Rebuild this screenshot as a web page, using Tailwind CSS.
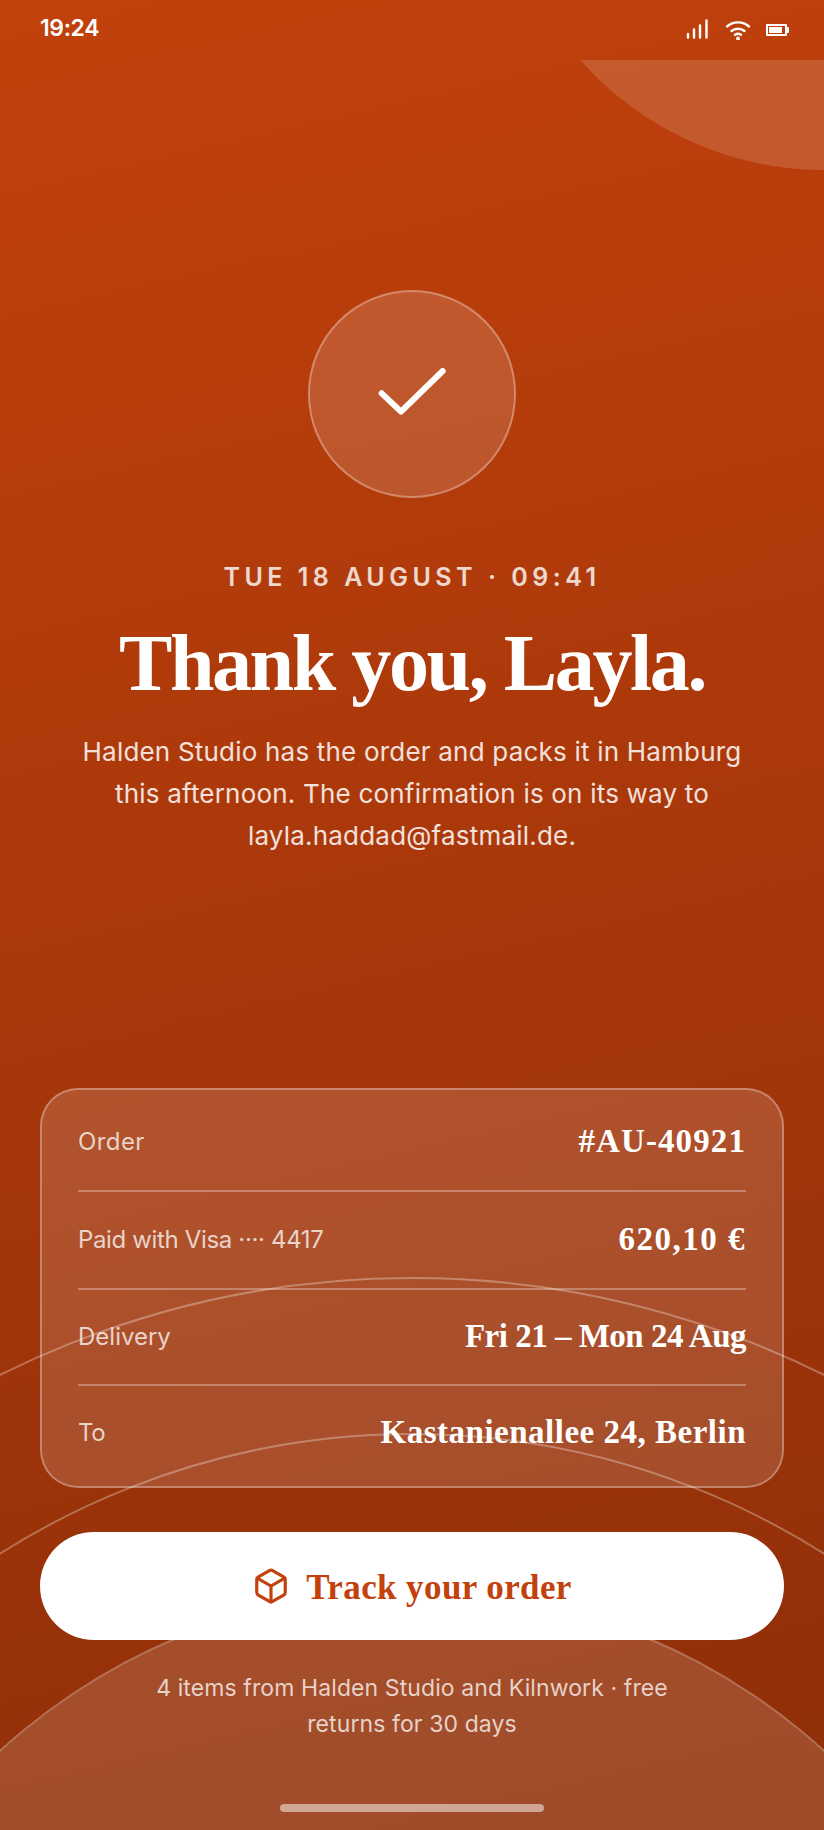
<!DOCTYPE html>
<html lang="en">
<head>
  <meta charset="UTF-8">
  <meta name="viewport" content="width=device-width, initial-scale=1.0">
  <title>Order confirmed</title>
  <script src="https://cdn.jsdelivr.net/npm/@tailwindcss/browser@4"></script>
</head>
<body class="font-['Inter',sans-serif]">
  <div class="relative w-[824px] h-[1830px] overflow-hidden bg-[linear-gradient(167deg,#c2410c,#8e2e08)] text-white">

    <!-- Decorative circles -->
    <div class="absolute top-[60px] left-0 right-0 bottom-0 overflow-hidden">
      <div class="absolute left-[499px] top-[-540px] w-[650px] h-[650px] rounded-full bg-white/14"></div>
      <div class="absolute left-[-513px] top-[1217px] w-[1850px] h-[1850px] rounded-full border-2 border-white/30"></div>
      <div class="absolute left-[-357px] top-[1373px] w-[1538px] h-[1538px] rounded-full border-2 border-white/30"></div>
      <div class="absolute left-[-200px] top-[1530px] w-[1224px] h-[1224px] rounded-full border-2 border-white/20 bg-white/14"></div>
    </div>

    <div class="relative flex flex-col items-center">
      <!-- Status bar -->
      <div class="w-full h-[60px] flex justify-between items-start px-[40px]">
        <span class="mt-[13px] text-[23px] leading-[30px] font-semibold tracking-[-0.4px]">19:24</span>
        <div class="flex items-start mt-[19px] mr-[-5px]">
          <svg width="22" height="20" viewBox="0 0 22 20" fill="none" stroke="white" stroke-width="2.4" stroke-linecap="round">
            <path d="M2 18.500v-3.500M8 18.500v-8M14 18.500v-12M20.500 18.500V1.500"/>
          </svg>
          <svg class="ml-[17px] mt-[1px]" width="26" height="20" viewBox="0 0 26 20" fill="none" stroke="white" stroke-width="2.400" stroke-linecap="round">
            <path d="M2 6.500c6-5.500 16-5.500 22 0"/>
            <path d="M6.500 11c3.500-3 9.500-3 13 0"/>
            <path d="M10 14.800c1.800-1.200 4.200-1.200 6 0"/>
            <circle cx="13" cy="18.500" r="0.700" fill="white"/>
          </svg>
          <div class="ml-[15px] mt-[5px] flex items-center">
            <div class="w-[21px] h-[12px] border-2 border-white rounded-[1px] p-[1px]">
              <div class="w-[13px] h-full bg-white"></div>
            </div>
            <div class="w-[2px] h-[6px] bg-white rounded-r-[1px]"></div>
          </div>
        </div>
      </div>

      <!-- Check badge -->
      <div class="mt-[230px] w-[208px] h-[208px] rounded-full bg-white/14 border-2 border-white/30 flex items-center justify-center">
        <svg width="80" height="60" viewBox="0 0 80 60" fill="none" stroke="white" stroke-width="6" stroke-linecap="round" stroke-linejoin="round">
          <path d="M9.700 29.300 29 47.700 70.700 7"/>
        </svg>
      </div>

      <p class="mt-[63px] text-[25px] leading-[32px] font-semibold tracking-[4.5px] text-white/80">TUE 18 AUGUST · 09:41</p>
      <h1 class="mt-[26px] font-['Liberation_Serif',serif] font-bold text-[80px] leading-[88px] tracking-[-2.4px]">Thank you, Layla.</h1>
      <p class="mt-[24px] text-center text-[26px] leading-[42px] font-normal tracking-[0.2px] text-white/85">
        Halden Studio has the order and packs it in Hamburg<br>
        this afternoon. The confirmation is on its way to<br>
        layla.haddad@fastmail.de.
      </p>

      <!-- Order summary -->
      <div class="mt-[231px] w-[744px] h-[400px] rounded-[38px] border-2 border-white/30 bg-white/14 px-[36px]">
        <div class="h-[102px] pt-[4px] flex items-center justify-between border-b-2 border-white/30">
          <span class="text-[24px] font-normal tracking-[0.4px] text-white/75">Order</span>
          <span class="font-['Liberation_Serif',serif] font-bold text-[33px] tracking-[1.100px]">#AU-40921</span>
        </div>
        <div class="h-[98px] flex items-center justify-between border-b-2 border-white/30">
          <span class="text-[24px] font-normal tracking-[-0.35px] text-white/75">Paid with Visa ···· 4417</span>
          <span class="font-['Liberation_Serif',serif] font-bold text-[33px] tracking-[1.500px]">620,10 €</span>
        </div>
        <div class="h-[96px] flex items-center justify-between border-b-2 border-white/30">
          <span class="text-[24px] font-normal tracking-[0px] text-white/75">Delivery</span>
          <span class="font-['Liberation_Serif',serif] font-bold text-[33px] tracking-[-0.5px]">Fri 21 – Mon 24 Aug</span>
        </div>
        <div class="h-[94px] flex items-center justify-between">
          <span class="text-[24px] font-normal tracking-[-0.3px] text-white/75">To</span>
          <span class="font-['Liberation_Serif',serif] font-bold text-[33px] tracking-[0.5px]">Kastanienallee 24, Berlin</span>
        </div>
      </div>

      <!-- Action -->
      <button class="mt-[44px] w-[744px] h-[108px] rounded-full bg-white flex items-center justify-center gap-[16px] text-[#c2410c]">
        <svg width="38" height="38" viewBox="0 0 24 24" fill="none" stroke="currentColor" stroke-width="2" stroke-linecap="round" stroke-linejoin="round">
          <path d="M21 8a2 2 0 0 0-1-1.730l-7-4a2 2 0 0 0-2 0l-7 4A2 2 0 0 0 3 8v8a2 2 0 0 0 1 1.730l7 4a2 2 0 0 0 2 0l7-4A2 2 0 0 0 21 16Z"/>
          <path d="m3.300 7 8.700 5 8.700-5"/>
          <path d="M12 22V12"/>
        </svg>
        <span class="pt-[4px] font-['Liberation_Serif',serif] font-bold text-[35px] tracking-[0.4px]">Track your order</span>
      </button>

      <p class="mt-[30px] text-center text-[23px] leading-[36px] font-normal tracking-[0.1px] text-white/75">
        4 items from Halden Studio and Kilnwork · free<br>
        returns for 30 days
      </p>

      <div class="mt-[62px] w-[264px] h-[8px] rounded-full bg-white/50"></div>
    </div>
  </div>
</body>
</html>
